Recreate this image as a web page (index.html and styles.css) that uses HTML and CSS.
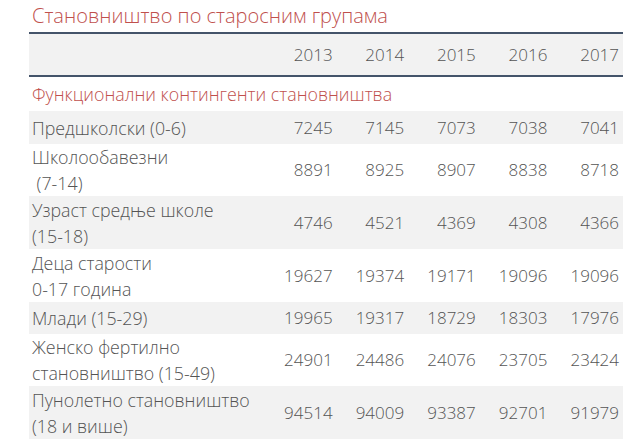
FILE: index.html
```html
<!DOCTYPE html>
<html lang="sr">
<head>
<meta charset="utf-8">
<link rel="stylesheet" href="styles.css">
</head>
<body>
<div class="page">
  <h1 class="title">Становништво по старосним групама</h1>
  <table class="data">
    <colgroup>
      <col class="c-label">
      <col class="c-num"><col class="c-num"><col class="c-num"><col class="c-num"><col class="c-num">
    </colgroup>
    <thead>
      <tr class="head">
        <th></th><th>2013</th><th>2014</th><th>2015</th><th>2016</th><th>2017</th>
      </tr>
    </thead>
    <tbody>
      <tr class="section"><td colspan="6">Функционални контингенти становништва</td></tr>
      <tr class="r1 odd"><td>Предшколски (0-6)</td><td>7245</td><td>7145</td><td>7073</td><td>7038</td><td>7041</td></tr>
      <tr class="r2"><td>Школообавезни<br>&nbsp;(7-14)</td><td>8891</td><td>8925</td><td>8907</td><td>8838</td><td>8718</td></tr>
      <tr class="r2b odd"><td>Узраст средње школе<br>(15-18)</td><td>4746</td><td>4521</td><td>4369</td><td>4308</td><td>4366</td></tr>
      <tr class="r2b"><td>Деца старости<br>0-17 година</td><td>19627</td><td>19374</td><td>19171</td><td>19096</td><td>19096</td></tr>
      <tr class="r1s odd"><td>Млади (15-29)</td><td>19965</td><td>19317</td><td>18729</td><td>18303</td><td>17976</td></tr>
      <tr class="r2c"><td>Женско фертилно<br>становништво (15-49)</td><td>24901</td><td>24486</td><td>24076</td><td>23705</td><td>23424</td></tr>
      <tr class="r2b odd"><td>Пунолетно становништво<br>(18 и више)</td><td>94514</td><td>94009</td><td>93387</td><td>92701</td><td>91979</td></tr>
    </tbody>
  </table>
</div>
</body>
</html>
```
FILE: styles.css
```css
html, body {
  margin: 0;
  padding: 0;
  background: #ffffff;
}
body {
  font-family: "Open Sans", "Noto Sans", sans-serif;
  color: #545454;
}
.page {
  padding-left: 29px;
  width: 594px;
}
.title {
  margin: 0;
  padding-left: 3px;
  font-size: 20px;
  font-weight: 300;
  line-height: 32px;
  height: 32px;
  color: #c0504d;
}
.data {
  width: 594px;
  border-collapse: collapse;
  table-layout: fixed;
  font-size: 17px;
  font-weight: 300;
}
.c-label { width: 236px; }
.c-num { width: 71.6px; }
.data td, .data th {
  padding: 0 4px 0 3px;
  line-height: 26px;
  vertical-align: middle;
  white-space: nowrap;
}
.data td:first-child {
  font-size: 17.8px;
}
.data td:not(:first-child), .data th:not(:first-child) {
  text-align: right;
}
.head {
  background: #f2f2f2;
  border-top: 2px solid #44546a;
  border-bottom: 2px solid #44546a;
  height: 43px;
}
.head th {
  font-weight: 300;
  height: 39px;
}
.section td {
  height: 34px;
  color: #c0504d;
  text-align: left !important;
}
.odd { background: #f2f2f2; }
.r1 td { height: 33px; }
.r1s td { height: 32px; }
.r2 td { height: 51px; }
.r2b td { height: 53px; }
.r2c td { height: 52px; }
```
